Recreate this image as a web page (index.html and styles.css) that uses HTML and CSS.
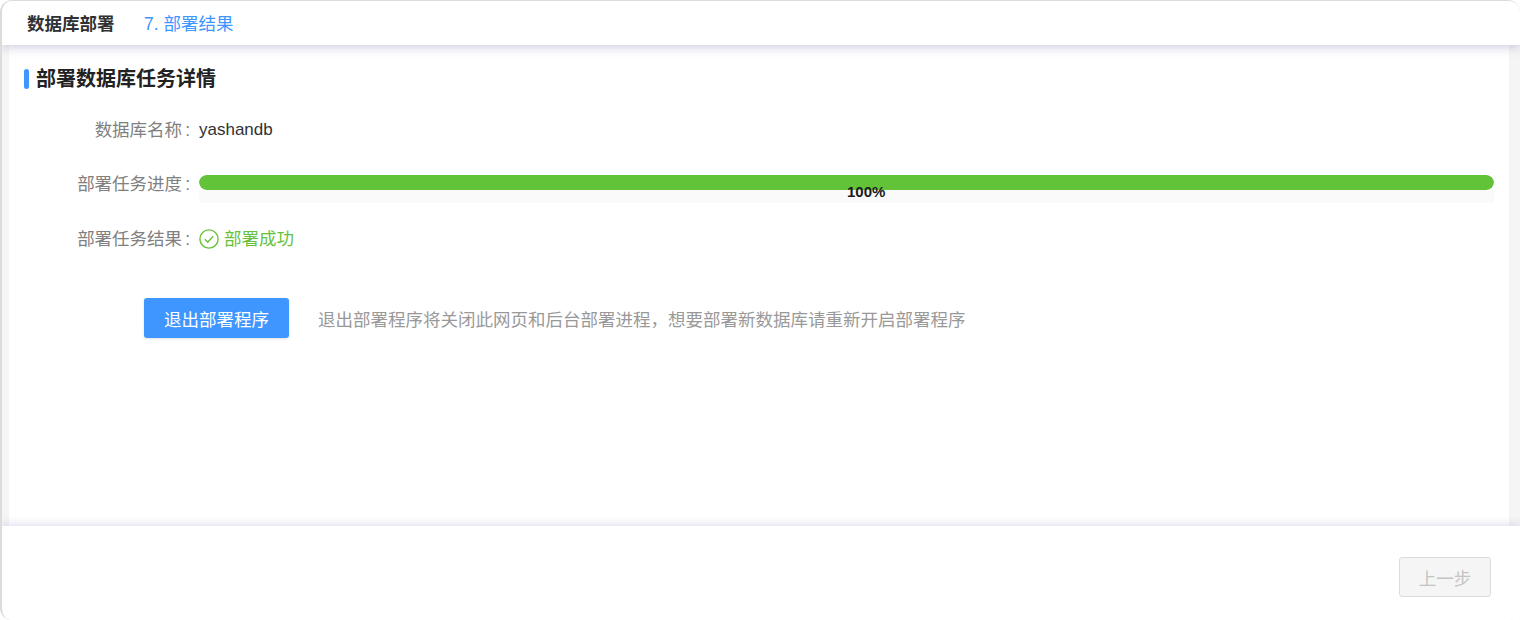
FILE: index.html
```html
<!DOCTYPE html>
<html lang="zh-CN">
<head>
<meta charset="utf-8">
<title>数据库部署</title>
<link rel="stylesheet" href="styles.css">
</head>
<body>
<div class="app">
  <header class="topbar">
    <span class="topbar-title">数据库部署</span>
    <span class="topbar-step">7. 部署结果</span>
  </header>
  <main class="main">
    <section class="panel">
      <h2 class="panel-title">部署数据库任务详情</h2>
      <div class="form-row row-name">
        <span class="form-label">数据库名称<span class="colon">:</span></span>
        <span class="form-value">yashandb</span>
      </div>
      <div class="form-row row-progress">
        <span class="form-label">部署任务进度<span class="colon">:</span></span>
        <div class="progress">
          <div class="progress-track"><div class="progress-fill"></div></div>
          <span class="progress-text">100%</span>
        </div>
      </div>
      <div class="form-row row-result">
        <span class="form-label">部署任务结果<span class="colon">:</span></span>
        <span class="result">
          <svg class="result-icon" viewBox="0 0 20 20" width="20" height="20" aria-hidden="true">
            <circle cx="10" cy="10" r="9.1" fill="none" stroke="#67c23a" stroke-width="1.4"/>
            <path d="M5.8 10.2l3 3 5.4-6" fill="none" stroke="#67c23a" stroke-width="1.4"/>
          </svg>
          部署成功
        </span>
      </div>
      <div class="actions">
        <button class="btn-primary" type="button">退出部署程序</button>
        <span class="hint">退出部署程序将关闭此网页和后台部署进程&#xFF0C;想要部署新数据库请重新开启部署程序</span>
      </div>
    </section>
  </main>
  <footer class="footer">
    <button class="btn-disabled" type="button" disabled>上一步</button>
  </footer>
</div>
</body>
</html>
```
FILE: styles.css
```css
* { box-sizing: border-box; }
html, body { margin: 0; padding: 0; height: 100%; background: #fff; overflow: hidden; }
body { font-family: "Liberation Sans", "Noto Sans CJK SC", sans-serif; font-size: 17.5px; }
.app {
  width: 1520px; height: 620px;
  display: flex; flex-direction: column;
  border-top: 1px solid #dcdcdc; border-left: 2px solid #dcdcdc;
  border-radius: 12px; overflow: hidden; background: #fff;
}
.topbar {
  height: 44px; flex: none; display: flex; align-items: center; gap: 29.5px;
  padding: 0 0 2px 25px; background: #fff;
  box-shadow: 0 2px 10px rgba(110, 110, 170, .35);
  position: relative; z-index: 1;
}
.topbar-title { font-weight: 700; color: #303133; }
.topbar-step { color: #4096ff; }
.main { flex: 1; min-height: 0; background: #f5f5f5; padding: 0 11px 0 7px; }
.panel { height: 100%; background: #fff; padding: 24px 15px 0; }
.panel-title {
  margin: 0; height: 20px; font-size: 20px; line-height: 20px; font-weight: 700;
  color: #222; display: flex; align-items: center; gap: 7px;
}
.panel-title::before {
  content: ""; width: 5px; height: 20px; flex: none; border-radius: 3px; background: #4096ff;
}
.form-row { display: flex; height: 24px; line-height: 24px; }
.row-name { margin-top: 29px; }
.row-progress { margin-top: 30px; }
.row-result { margin-top: 31px; }
.form-label { width: 175px; flex: none; padding-right: 9px; text-align: right; color: #808080; white-space: nowrap; }
.colon { margin-left: 3px; }
.form-value { color: #303133; font-size: 17px; }
.progress { position: relative; width: 1295px; height: 28px; margin-top: 3px; background: linear-gradient(#fff 0, #fff 15px, #fafafa 15px); }
.progress-track { height: 15px; border-radius: 8px; overflow: hidden; background: #f5f5f5; }
.progress-fill { height: 100%; width: 100%; background: #62c338; border-radius: 8px; }
.progress-text { position: absolute; left: 648px; top: 8px; font-size: 15px; line-height: 18px; font-weight: 700; color: #1a1a1a; }
.result { display: flex; align-items: center; gap: 5px; color: #67c23a; }
.actions { display: flex; align-items: center; margin-top: 47px; padding-left: 120px; gap: 29px; }
.btn-primary {
  width: 145px; height: 40px; border: 0; border-radius: 3px; background: #4096ff; color: #fff;
  font: inherit; padding: 0; box-shadow: 0 1px 3px rgba(0, 0, 0, .12);
}
.hint { color: #999; }
.footer {
  height: 94px; flex: none; background: #fff; display: flex; justify-content: flex-end; align-items: flex-start;
  padding: 31px 29px 0 0; position: relative;
  box-shadow: 0 -2px 8px rgba(110, 110, 190, .22);
}
.btn-disabled {
  width: 92px; height: 40px; border: 1px solid #dcdcdc; border-radius: 3px; background: #f5f5f5;
  color: #c4c4c4; font: inherit; padding: 0;
}
```
